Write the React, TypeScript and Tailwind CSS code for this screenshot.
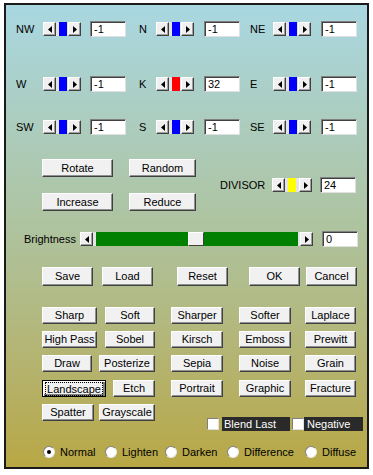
import React from 'react';

const font = { fontFamily: '"Liberation Sans", Arial, sans-serif' };

function Arrow({ dir }: { dir: 'l' | 'r' }) {
  return (
    <div className="flex-none w-[13px] h-full flex items-center justify-center bg-[#f0f0f0] border border-t-white border-l-white border-r-[#404040] border-b-[#404040] shadow-[inset_-1px_-1px_0_#a0a0a0]">
      <svg width="4" height="7" viewBox="0 0 4 7">
        {dir === 'l' ? <path d="M4 0 L0 3.5 L4 7 Z" fill="#000" /> : <path d="M0 0 L4 3.5 L0 7 Z" fill="#000" />}
      </svg>
    </div>
  );
}

function MiniSlider({ thumb, w = 'w-[38px]' }: { thumb: string; w?: string }) {
  return (
    <div className={`flex-none ${w} h-[14px] flex`}>
      <Arrow dir="l" />
      <div className="flex-1 h-full bg-[#e4e4e4] flex items-stretch pl-[3px]">
        <div className={`w-[8px] h-full ${thumb}`} />
      </div>
      <Arrow dir="r" />
    </div>
  );
}

function Field({ value, w = 'w-[36px]' }: { value: string; w?: string }) {
  return (
    <div className={`flex-none ${w} h-[16px] bg-white border border-t-[#808080] border-l-[#808080] border-r-[#e0e0e0] border-b-[#e0e0e0] shadow-[inset_1px_1px_0_#404040] pl-[3px] text-[11px] leading-[14px] text-black`}>
      {value}
    </div>
  );
}

function Btn({ label, w, h = 'h-[18px]', focused }: { label: string; w: string; h?: string; focused?: boolean }) {
  return (
    <div
      className={`flex-none ${w} ${h} flex items-center justify-center whitespace-nowrap bg-[#f1f1f1] border ${focused ? 'border-black shadow-[inset_1px_1px_0_#fff,inset_-2px_-2px_0_#808080]' : 'border-t-white border-l-white border-r-[#404040] border-b-[#404040] shadow-[inset_-1px_-1px_0_#909090]'} text-[11px] text-black`}
    >
      <span className={focused ? 'outline outline-1 outline-dotted outline-black leading-[12px] px-[1px]' : ''}>{label}</span>
    </div>
  );
}

function Radio({ label, on, w }: { label: string; on?: boolean; w: string }) {
  return (
    <div className={`flex-none flex items-center whitespace-nowrap ${w}`}>
      <div className="w-[12px] h-[12px] rounded-full bg-white border border-t-[#808080] border-l-[#808080] border-r-[#e8e8e8] border-b-[#e8e8e8] flex items-center justify-center">
        {on && <div className="w-[4px] h-[4px] rounded-full bg-black" />}
      </div>
      <span className="ml-[5px] text-[11px] text-black">{label}</span>
    </div>
  );
}

function Check() {
  return <div className="flex-none w-[12px] h-[12px] bg-white border border-t-[#808080] border-l-[#808080] border-r-[#e0e0e0] border-b-[#e0e0e0]" />;
}

function DirRow({ cells, mt }: { cells: [string, string, string][]; mt: string }) {
  return (
    <div className={`flex items-center h-[16px] ${mt} pl-[10px] text-[11px]`}>
      <span className="w-[27px]">{cells[0][0]}</span>
      <MiniSlider thumb={cells[0][2]} />
      <div className="w-[9px]" />
      <Field value={cells[0][1]} />
      <span className="ml-[13px] w-[17px]">{cells[1][0]}</span>
      <MiniSlider thumb={cells[1][2]} />
      <div className="w-[10px]" />
      <Field value={cells[1][1]} />
      <span className="ml-[10px] w-[23px]">{cells[2][0]}</span>
      <MiniSlider thumb={cells[2][2]} />
      <div className="w-[10px]" />
      <Field value={cells[2][1]} />
    </div>
  );
}

export default function App() {
  const blue = 'bg-[#0000ff]';
  return (
    <div className="w-[373px] h-[475px] bg-white pt-[3px] pl-[4px] pr-[4px] pb-[6px]" style={font}>
      <div className="w-full h-full border-2 border-[#1a1a1a] bg-gradient-to-b from-[#a9d7e1] via-[#aec29c] to-[#b8a743] flex flex-col text-black">
        <DirRow mt="mt-[16px]" cells={[['NW', '-1', blue], ['N', '-1', blue], ['NE', '-1', blue]]} />
        <DirRow mt="mt-[39px]" cells={[['W', '-1', blue], ['K', '32', 'bg-[#ff0000]'], ['E', '-1', blue]]} />
        <DirRow mt="mt-[27px]" cells={[['SW', '-1', blue], ['S', '-1', blue], ['SE', '-1', blue]]} />

        <div className="flex items-center mt-[24px] pl-[36px]">
          <div className="flex flex-col gap-[16px]">
            <div className="flex gap-[16px]">
              <Btn label="Rotate" w="w-[71px]" />
              <Btn label="Random" w="w-[67px]" />
            </div>
            <div className="flex gap-[16px]">
              <Btn label="Increase" w="w-[71px]" />
              <Btn label="Reduce" w="w-[67px]" />
            </div>
          </div>
          <span className="ml-[24px] w-[52px] text-[11px]">DIVISOR</span>
          <MiniSlider thumb="bg-[#ffff00]" w="w-[40px]" />
          <div className="w-[8px]" />
          <Field value="24" />
        </div>

        <div className="flex items-center mt-[20px] pl-[18px] h-[16px]">
          <span className="w-[56px] text-[11px]">Brightness</span>
          <div className="flex-none w-[233px] h-[14px] flex">
            <Arrow dir="l" />
            <div className="w-[3px] bg-[#e4e4e4]" />
            <div className="flex-1 flex bg-[#008000]">
              <div className="w-[92px]" />
              <div className="w-[16px] h-full bg-[#f1f1f1] border border-t-white border-l-white border-r-[#404040] border-b-[#404040]" />
            </div>
            <div className="w-[2px] bg-[#e4e4e4]" />
            <Arrow dir="r" />
          </div>
          <div className="w-[9px]" />
          <Field value="0" />
        </div>

        <div className="flex mt-[20px] pl-[36px]">
          <Btn label="Save" w="w-[51px]" h="h-[19px]" />
          <div className="w-[9px]" />
          <Btn label="Load" w="w-[51px]" h="h-[19px]" />
          <div className="w-[24px]" />
          <Btn label="Reset" w="w-[51px]" h="h-[19px]" />
          <div className="w-[21px]" />
          <Btn label="OK" w="w-[51px]" h="h-[19px]" />
          <div className="w-[6px]" />
          <Btn label="Cancel" w="w-[51px]" h="h-[19px]" />
        </div>

        <div className="flex flex-col mt-[21px] pl-[36px] gap-[7px]">
          <div className="flex">
            <Btn label="Sharp" w="w-[55px]" h="h-[17px]" />
            <div className="w-[8px]" />
            <Btn label="Soft" w="w-[50px]" h="h-[17px]" />
            <div className="w-[16px]" />
            <Btn label="Sharper" w="w-[52px]" h="h-[17px]" />
            <div className="w-[16px]" />
            <Btn label="Softer" w="w-[52px]" h="h-[17px]" />
            <div className="w-[14px]" />
            <Btn label="Laplace" w="w-[51px]" h="h-[17px]" />
          </div>
          <div className="flex">
            <Btn label="High Pass" w="w-[55px]" h="h-[17px]" />
            <div className="w-[8px]" />
            <Btn label="Sobel" w="w-[50px]" h="h-[17px]" />
            <div className="w-[16px]" />
            <Btn label="Kirsch" w="w-[52px]" h="h-[17px]" />
            <div className="w-[16px]" />
            <Btn label="Emboss" w="w-[52px]" h="h-[17px]" />
            <div className="w-[14px]" />
            <Btn label="Prewitt" w="w-[51px]" h="h-[17px]" />
          </div>
          <div className="flex">
            <Btn label="Draw" w="w-[50px]" h="h-[17px]" />
            <div className="w-[7px]" />
            <Btn label="Posterize" w="w-[56px]" h="h-[17px]" />
            <div className="w-[16px]" />
            <Btn label="Sepia" w="w-[52px]" h="h-[17px]" />
            <div className="w-[16px]" />
            <Btn label="Noise" w="w-[52px]" h="h-[17px]" />
            <div className="w-[14px]" />
            <Btn label="Grain" w="w-[51px]" h="h-[17px]" />
          </div>
          <div className="flex mt-[1px]">
            <Btn label="Landscape" w="w-[64px]" h="h-[17px]" focused />
            <div className="w-[7px]" />
            <Btn label="Etch" w="w-[42px]" h="h-[17px]" />
            <div className="w-[16px]" />
            <Btn label="Portrait" w="w-[52px]" h="h-[17px]" />
            <div className="w-[16px]" />
            <Btn label="Graphic" w="w-[52px]" h="h-[17px]" />
            <div className="w-[14px]" />
            <Btn label="Fracture" w="w-[51px]" h="h-[17px]" />
          </div>
          <div className="flex items-start">
            <Btn label="Spatter" w="w-[52px]" h="h-[17px]" />
            <div className="w-[5px]" />
            <Btn label="Grayscale" w="w-[56px]" h="h-[17px]" />
            <div className="flex items-center mt-[13px] ml-[52px] h-[14px] whitespace-nowrap">
              <Check />
              <div className="w-[3px]" />
              <span className="h-[14px] w-[68px] bg-[#2a2a2a] text-white text-[11px] leading-[14px] pl-[2px]">Blend Last</span>
              <div className="w-[2px]" />
              <Check />
              <span className="h-[14px] w-[59px] bg-[#2a2a2a] text-white text-[11px] leading-[14px] pl-[3px]">Negative</span>
            </div>
          </div>
        </div>

        <div className="flex items-center mt-[14px] pl-[37px] h-[14px]">
          <Radio label="Normal" on w="w-[62px]" />
          <Radio label="Lighten" w="w-[60px]" />
          <Radio label="Darken" w="w-[62px]" />
          <Radio label="Difference" w="w-[78px]" />
          <Radio label="Diffuse" w="w-[56px]" />
        </div>
      </div>
    </div>
  );
}
